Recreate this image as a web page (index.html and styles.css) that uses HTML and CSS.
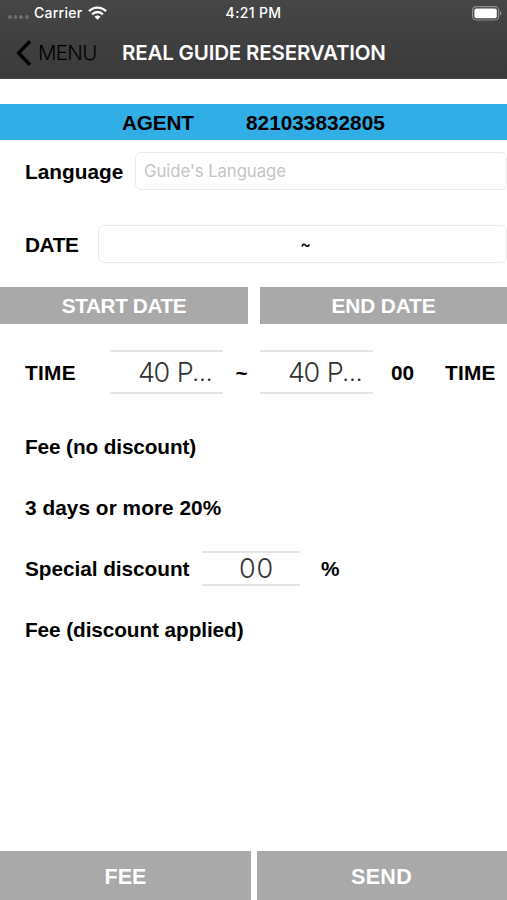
FILE: index.html
```html
<!DOCTYPE html>
<html lang="en">
<head>
<meta charset="utf-8">
<title>Real Guide Reservation</title>
<link rel="stylesheet" href="styles.css">
</head>
<body>
<header class="top">
  <div class="status">
    <div class="carrier">
      <span class="signal"><i></i><i></i><i></i><i></i></span>
      <span class="carrier-name">Carrier</span>
      <svg class="wifi" width="19" height="14" viewBox="0 0 19 14" fill="none" stroke="#fff" stroke-width="2.4"><path d="M1 5.1C5.8.4 13.2.4 18 5.1"/><path d="M4.1 8.3c3-3 7.8-3 10.8 0"/><path d="M6.5 10.7c1.7-1.6 4.3-1.6 6 0l-3 3z" fill="#fff" stroke="none"/></svg>
    </div>
    <span class="clock">4:21 PM</span>
    <svg class="battery" width="30" height="15" viewBox="0 0 30 15"><rect x=".6" y=".6" width="26" height="13.4" rx="3.6" fill="none" stroke="#8c8c8c" stroke-width="1.2"/><rect x="2.4" y="2.4" width="22.4" height="9.8" rx="2" fill="#fff"/><path d="M28 5v4.6c2-.7 2-3.9 0-4.6z" fill="#8c8c8c"/></svg>
  </div>
  <nav class="nav">
    <svg class="back" width="16" height="26" viewBox="0 0 16 26" fill="none" stroke="#000" stroke-width="3.4"><path d="M14 1.3 2.6 13 14 24.7"/></svg>
    <span class="menu">MENU</span>
    <h1 class="title">REAL GUIDE RESERVATION</h1>
  </nav>
</header>
<main class="form">
  <div class="agent"><span class="agent-label">AGENT</span><span>821033832805</span></div>
  <div class="row language"><span class="label">Language</span><div class="field placeholder">Guide's Language</div></div>
  <div class="row date"><span class="label">DATE</span><div class="field range"><span>~</span></div></div>
  <div class="dates"><div class="button start">START DATE</div><div class="button end">END DATE</div></div>
  <div class="row time">
    <span class="label">TIME</span>
    <div class="picker"><span>40</span><span class="unit">P</span><span class="dots">...</span></div>
    <span class="to">~</span>
    <div class="picker"><span>40</span><span class="unit">P</span><span class="dots">...</span></div>
    <span class="hours">00</span><span class="suffix">TIME</span>
  </div>
  <div class="row line"><span class="fee">Fee (no discount)</span></div>
  <div class="row line"><span class="days">3 days or more 20%</span></div>
  <div class="row line"><span class="special">Special discount</span><div class="picker percent">00</div><span>%</span></div>
  <div class="row line"><span class="applied">Fee (discount applied)</span></div>
</main>
<footer class="actions"><div class="button">FEE</div><div class="button send">SEND</div></footer>
</body>
</html>
```
FILE: styles.css
```css
* { box-sizing: border-box; }
body {
  margin: 0;
  height: 900px;
  display: flex;
  flex-direction: column;
  overflow: hidden;
  background: #fff;
  color: #000;
  font: bold 20.8px/24px "Liberation Sans", Arial, sans-serif;
  white-space: nowrap;
}
.top {
  height: 79px;
  background: linear-gradient(#464646, #3a3a3a);
  border-bottom: 1px solid #4a4a4a;
  font-family: Inter, sans-serif;
  color: #fff;
}
.status {
  height: 26px;
  display: grid;
  grid-template-columns: 1fr auto 1fr;
  align-items: center;
  padding: 0 5px 0 8px;
  font-size: 14px;
  font-weight: 500;
}
.carrier { display: flex; align-items: center; }
.signal { display: flex; gap: 2px; width: 26px; padding-top: 8px; }
.signal i { width: 3.7px; height: 3.7px; border-radius: 50%; background: #6c6c6c; }
.carrier-name { width: 54px; letter-spacing: .25px; }
.clock { letter-spacing: .35px; margin-left: -3px; }
.battery { justify-self: end; }
.nav { height: 53px; display: flex; align-items: center; padding-left: 16px; }
.menu { width: 84px; margin-left: 6px; color: #000; font-size: 20.5px; font-weight: 300; letter-spacing: -.7px; }
.title { margin: 0; font-size: 20.5px; font-weight: 600; letter-spacing: -.17px; }
.form { flex: 1; }
.agent {
  height: 36px;
  margin-top: 25px;
  padding: 2px 0 0 122px;
  display: flex;
  align-items: center;
  background: #32aee7;
}
.agent-label { width: 124px; letter-spacing: -.2px; }
.row { display: flex; align-items: center; padding-left: 25px; }
.label { flex: none; }
.language { height: 37px; margin-top: 12px; }
.language .label { width: 110px; padding-top: 3px; }
.field { flex: 1; height: 38px; border: 1px solid #e9e9e9; border-radius: 6px; }
.placeholder {
  padding-left: 8px;
  color: #c4c4c6;
  font: 400 16.8px/36px Inter, sans-serif;
  letter-spacing: -.1px;
}
.date { height: 38px; margin-top: 36px; }
.date .label { width: 73px; letter-spacing: -.4px; padding-top: 2px; }
.range { text-align: center; font: 500 16px/37px Inter, sans-serif; padding-left: 6px; }
.dates { display: grid; grid-template-columns: 248px 247px; gap: 12px; height: 37px; margin-top: 24px; }
.button { display: flex; align-items: center; justify-content: center; background: #a9a9a9; color: #fff; }
.start { letter-spacing: -.4px; }
.end { letter-spacing: -.1px; }
.time { height: 44px; margin-top: 26px; }
.time .label { width: 85px; letter-spacing: .3px; }
.time .label, .to, .hours, .suffix { padding-top: 2px; }
.picker {
  flex: none;
  display: flex;
  align-items: center;
  width: 113px;
  height: 44px;
  padding: 2px 0 0 28px;
  border: solid #e5e5e5;
  border-width: 2px 0;
  color: #333;
  font: 300 27px/30px Inter, sans-serif;
  letter-spacing: -1.5px;
}
.unit { margin-left: 8px; }
.dots { letter-spacing: 0; font-size: 24px; }
.to { width: 37px; text-align: center; }
.hours { width: 54px; padding-left: 18px; margin-right: 18px; }
.suffix { letter-spacing: .2px; }
.line { height: 61px; }
.time + .line { margin-top: 22px; }
.fee { letter-spacing: -.13px; }
.days { letter-spacing: .05px; }
.applied { letter-spacing: -.1px; }
.special { width: 177px; letter-spacing: -.05px; }
.percent { width: 98px; height: 35px; margin-right: 21px; padding: 0 0 0 11px; justify-content: center; letter-spacing: .8px; }
.actions { display: grid; grid-template-columns: 251px 250px; gap: 6px; height: 49px; }
.actions .button { font-size: 21.5px; padding-top: 2px; }
.actions .send { letter-spacing: .3px; padding-right: 1px; }
```
